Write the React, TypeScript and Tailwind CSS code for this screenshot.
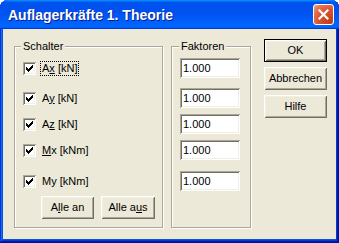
import React from "react";

const font = { fontFamily: '"Liberation Sans", Arial, sans-serif' };

function Check({ checked = true }: { checked?: boolean }) {
  return (
    <div className="w-[13px] h-[13px] shrink-0 bg-white shadow-[inset_1px_1px_0_#ACA899,inset_-1px_-1px_0_#ffffff,inset_2px_2px_0_#716F64,inset_-2px_-2px_0_#F1EFE2] flex items-center justify-center">
      {checked && (
        <svg width="7" height="7" viewBox="0 0 7 7" shapeRendering="crispEdges">
          <rect x="0" y="2" width="1" height="3" fill="#000" />
          <rect x="1" y="3" width="1" height="3" fill="#000" />
          <rect x="2" y="4" width="1" height="3" fill="#000" />
          <rect x="3" y="3" width="1" height="3" fill="#000" />
          <rect x="4" y="2" width="1" height="3" fill="#000" />
          <rect x="5" y="1" width="1" height="3" fill="#000" />
          <rect x="6" y="0" width="1" height="3" fill="#000" />
        </svg>
      )}
    </div>
  );
}

function Btn({ children, w, def = false }: { children: React.ReactNode; w: string; def?: boolean }) {
  return (
    <button
      className={`${w} h-[23px] text-[11px] leading-[13px] text-black bg-[#ECE9D8] flex items-center justify-center ${
        def
          ? "border border-black shadow-[inset_1px_1px_0_#ffffff,inset_-1px_-1px_0_#716F64,inset_2px_2px_0_#F1EFE2,inset_-2px_-2px_0_#ACA899]"
          : "shadow-[inset_1px_1px_0_#ffffff,inset_-1px_-1px_0_#716F64,inset_2px_2px_0_#F1EFE2,inset_-2px_-2px_0_#ACA899]"
      }`}
    >
      {children}
    </button>
  );
}

function Group({ label, w, labelLeft, children }: { label: string; w: string; labelLeft: string; children: React.ReactNode }) {
  return (
    <div className={`relative ${w} h-[182px] mt-[7px] border border-[#ACA899] shadow-[inset_1px_1px_0_#ffffff,1px_1px_0_#ffffff]`}>
      <span className={`absolute -top-[7px] ${labelLeft} px-[2px] bg-[#ECE9D8] text-[11px] leading-[13px] text-black`}>
        {label}
      </span>
      {children}
    </div>
  );
}

const rows = [
  { pre: "A", u: "x", post: " [kN]", mt: "mt-[11px]", focus: true },
  { pre: "A", u: "y", post: " [kN]", mt: "mt-[10px]" },
  { pre: "A", u: "z", post: " [kN]", mt: "mt-[6px]" },
  { pre: "", u: "M", post: "x [kNm]", mt: "mt-[6px]" },
  { pre: "My [kNm]", u: "", post: "", mt: "mt-[11px]" },
];

export default function App() {
  return (
    <div className="w-[339px] h-[243px] bg-white" style={font}>
      <div className="w-[339px] h-[243px] flex flex-col rounded-t-[8px] overflow-hidden bg-[#0855DD] shadow-[inset_-1px_-1px_0_#00138C,inset_1px_1px_0_#0831D9,inset_-2px_-2px_0_#001EA0,inset_2px_2px_0_#166AEE,inset_-3px_-3px_0_#003BDA,inset_3px_3px_0_#0855DD]">
        <div className="h-[29px] shrink-0 flex items-center pl-[8px] pr-[5px] bg-[linear-gradient(180deg,#0997FF,#0053EE_8%,#0050EE_40%,#0066FF_88%,#0066FF_93%,#005BFF_95%,#003DD7_96%,#003DD7)]">
          <span className="text-white font-bold text-[14px] leading-[16px] [text-shadow:1px_1px_0_#0A1883]">
            Auflagerkräfte 1. Theorie
          </span>
          <button className="ml-auto w-[21px] h-[21px] rounded-[3px] border border-white bg-[radial-gradient(circle_at_85%_85%,#C13C14_0%,#DA5330_50%,#E4714F_75%,#F0A58C_100%)] flex items-center justify-center">
            <svg width="11" height="11" viewBox="0 0 11 11">
              <path d="M1.5 1.5 L9.5 9.5 M9.5 1.5 L1.5 9.5" stroke="white" strokeWidth="2.2" strokeLinecap="square" />
            </svg>
          </button>
        </div>

        <div className="flex-1 mx-[3px] mb-[4px] bg-[#ECE9D8] flex items-start pl-[11px] pt-[10px]">
          <Group label="Schalter" w="w-[149px]" labelLeft="left-[6px]">
            <div className="flex flex-col pl-[8px]">
              {rows.map((r, i) => (
                <div key={i} className={`${r.mt} h-[20px] flex items-center`}>
                  <Check />
                  <span
                    className={`ml-[4px] px-px border text-[11px] leading-[13px] text-black ${
                      r.focus ? "border-dotted border-black" : "border-transparent"
                    }`}
                  >
                    {r.pre}
                    {r.u && <span className="underline underline-offset-[1px]">{r.u}</span>}
                    {r.post}
                  </span>
                </div>
              ))}
              <div className="mt-[5px] ml-[18px] flex gap-[7px]">
                <Btn w="w-[53px]">
                  <span>
                    A<span className="underline underline-offset-[1px]">l</span>le an
                  </span>
                </Btn>
                <Btn w="w-[54px]">
                  <span>
                    Alle a<span className="underline underline-offset-[1px]">u</span>s
                  </span>
                </Btn>
              </div>
            </div>
          </Group>

          <div className="ml-[8px]">
            <Group label="Faktoren" w="w-[80px]" labelLeft="left-[7px]">
              <div className="flex flex-col pl-[8px]">
                {rows.map((r, i) => (
                  <div
                    key={i}
                    className={`${r.mt} w-[60px] h-[20px] bg-white flex items-center pl-[3px] text-[11px] leading-[13px] text-black shadow-[inset_1px_1px_0_#ACA899,inset_-1px_-1px_0_#ffffff,inset_2px_2px_0_#716F64,inset_-2px_-2px_0_#F1EFE2]`}
                  >
                    1.000
                  </div>
                ))}
              </div>
            </Group>
          </div>

          <div className="ml-[13px] flex flex-col gap-[5px]">
            <Btn w="w-[63px]" def>
              OK
            </Btn>
            <Btn w="w-[63px]">Abbrechen</Btn>
            <Btn w="w-[63px]">Hilfe</Btn>
          </div>
        </div>
      </div>
    </div>
  );
}
